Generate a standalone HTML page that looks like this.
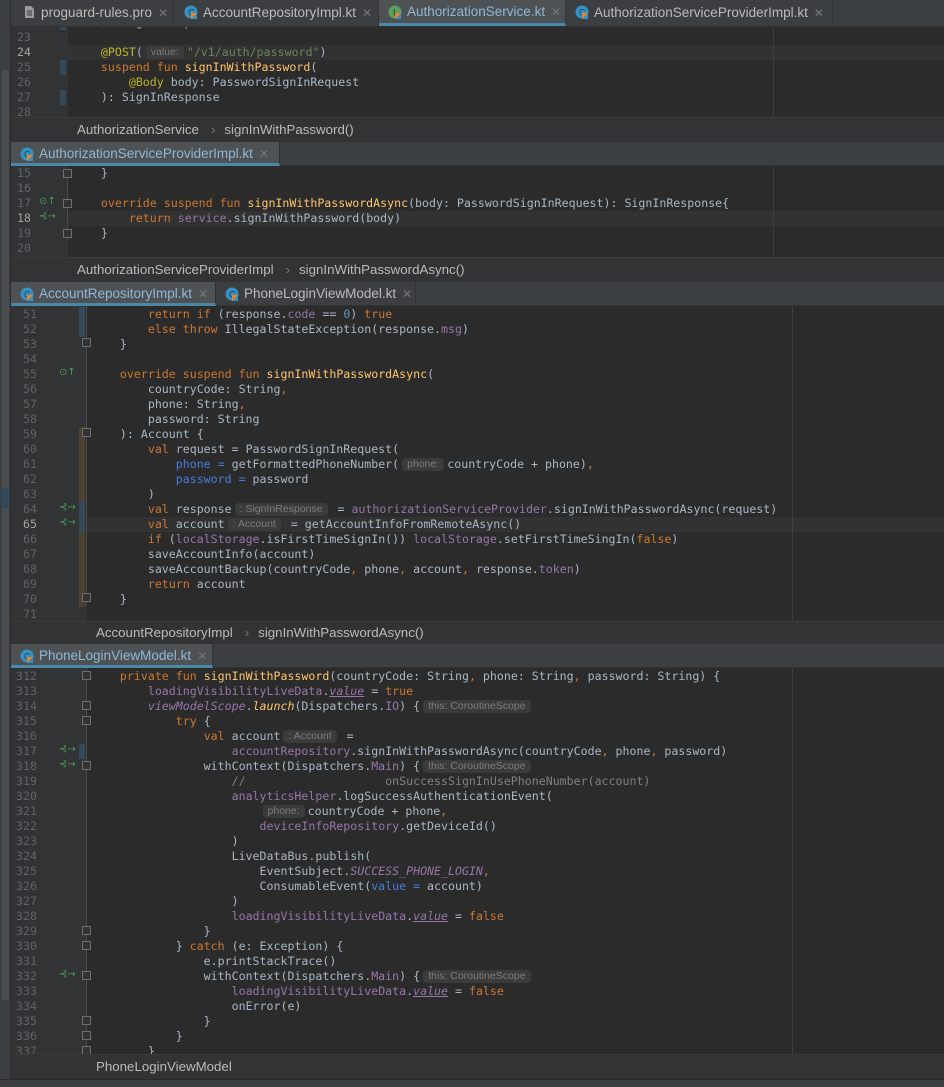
<!DOCTYPE html>
<html><head><meta charset="utf-8"><style>
*{margin:0;padding:0;box-sizing:border-box}
body{width:944px;height:1087px;background:#3c3f41;position:relative;overflow:hidden;font-family:"DejaVu Sans Mono",monospace}
.strip{position:absolute;left:0;top:0;width:11px;height:1087px;background:#3c3f41;border-right:1px solid #2b2b2b}
.strip i{position:absolute;left:2px;width:7px;background:#4a4d4f}
.tabs{position:absolute;left:11px;right:0;height:24px;background:#3c3f41;border-bottom:1px solid #323232;font-family:"Liberation Sans",sans-serif;font-size:13.5px;color:#bbbbbb}
.tab{position:absolute;top:0;height:24px;line-height:24px;padding-left:28px;border-right:1px solid #323232;white-space:nowrap}
.tab.act{background:#4e5254;border-bottom:3px solid #4a88a8}
.tab .x{color:#777;font-size:12px;margin-left:6px}
.ic{position:absolute;left:9px;top:5px;width:14px;height:14px}
.pane{position:absolute;left:11px;right:0;background:#2b2b2b;overflow:hidden}
.gut{position:absolute;left:0;top:0;bottom:0;background:#313335}
.ln{position:absolute;left:0;text-align:right;color:#606366;font-size:11.6px;line-height:15px;white-space:pre}
.code{position:absolute;font-size:11.6px;line-height:15px;color:#a9b7c6;white-space:pre}
.code div{height:15px}
.cur{position:absolute;right:0;height:15px;background:#323232}
.marg{position:absolute;top:0;bottom:0;width:1px;background:#3f3f3f}
.k{color:#cc7832}.f{color:#ffc66d}.s{color:#6a8759}.n{color:#6897bb}.p{color:#9876aa}.a{color:#bbb529}.c{color:#808080}.b{color:#467cda}
.i{font-style:italic}.u{text-decoration:underline}
.h{display:inline-block;background:#3b3b3b;color:#7d7d7d;font-family:"Liberation Sans",sans-serif;font-size:10.5px;line-height:13px;padding:0 5px;border-radius:4px;margin:0 3px;vertical-align:1px}
.bc{position:absolute;left:11px;right:0;height:25px;background:#313335;border-top:1px solid #3a3a3a;font-family:"Liberation Sans",sans-serif;font-size:13.3px;color:#bbbbbb;line-height:24px;white-space:nowrap}
.bc .sp{color:#777;margin:0 9px 0 12px}
.chg{position:absolute;width:6px}
.fold{position:absolute;width:1px;background:#4a4a4a}
.fm{position:absolute;width:9px;height:9px;border:1px solid #6e6e6e;background:#313335}
.gi{position:absolute;color:#499c54;font-size:10px;font-family:"DejaVu Sans",sans-serif}
</style></head><body>
<div class="strip"><i style="top:70px;height:930px"></i><i style="top:488px;height:20px;background:#2f4a5e"></i></div>

<div class="tabs" style="top:0;height:27px">
 <div class="tab" style="left:2px;width:161px;height:26px;line-height:26px"><svg class="ic" viewBox="0 0 14 14"><path d="M3 1h6l3 3v9H3z" fill="#9a9a9a"/><path d="M5 6h5M5 8h5M5 10h5" stroke="#3c3f41"/></svg>proguard-rules.pro<span class="x">✕</span></div>
 <div class="tab" style="left:164px;width:204px;height:26px;line-height:26px"><svg class="ic" viewBox="0 0 14 14"><circle cx="7" cy="7" r="6.5" fill="#3592c4"/><text x="4" y="10.5" font-size="9" fill="#1e3a4e" font-family="Liberation Sans">C</text><path d="M7 14V8h6z" fill="#f58220"/><path d="M7 14l6-6v6z" fill="#3592c4"/></svg>AccountRepositoryImpl.kt<span class="x">✕</span></div>
 <div class="tab act" style="left:368px;width:187px;height:26px;line-height:24px;color:#8fb8d8"><svg class="ic" viewBox="0 0 14 14"><circle cx="7" cy="7" r="6.5" fill="#5c9f5e"/><text x="5" y="10.5" font-size="9" fill="#1d3a1e" font-family="Liberation Sans">I</text><path d="M7 14V8h6z" fill="#f58220"/><path d="M7 14l6-6v6z" fill="#3592c4"/></svg>AuthorizationService.kt<span class="x">✕</span></div>
 <div class="tab" style="left:555px;width:267px;height:26px;line-height:26px"><svg class="ic" viewBox="0 0 14 14"><circle cx="7" cy="7" r="6.5" fill="#3592c4"/><text x="4" y="10.5" font-size="9" fill="#1e3a4e" font-family="Liberation Sans">C</text><path d="M7 14V8h6z" fill="#f58220"/><path d="M7 14l6-6v6z" fill="#3592c4"/></svg>AuthorizationServiceProviderImpl.kt<span class="x">✕</span></div>
</div>

<div class="pane" style="top:27px;height:90px">
 <div class="gut" style="width:57px"></div>
 <div class="cur" style="left:57px;top:18px"></div>
 <div class="marg" style="left:762px"></div>
 <div class="chg" style="left:49px;top:-7px;height:10px;background:#34495a"></div>
 <div class="chg" style="left:49px;top:33px;height:15px;background:#34495a"></div>
 <div class="chg" style="left:49px;top:63px;height:15px;background:#34495a"></div>
 <div class="ln" style="width:20px;top:-12px"><div>22</div><div>23</div><div style="color:#a4a3a3">24</div><div>25</div><div>26</div><div>27</div><div>28</div></div>
 <div class="code" style="left:62px;top:-12px"><div>    ): SignInResponse</div><div></div><div>    <span class="a">@POST</span>(<span class="h">value:</span><span class="s">"/v1/auth/password"</span>)</div><div>    <span class="k">suspend fun </span><span class="f">signInWithPassword</span>(</div><div>        <span class="a">@Body</span> body: PasswordSignInRequest</div><div>    ): SignInResponse</div><div></div></div>
</div>
<div class="bc" style="top:117px;padding-left:66px">AuthorizationService<span class="sp">›</span>signInWithPassword()</div>

<div class="tabs" style="top:142px"><div class="tab act" style="left:0;width:269px;color:#8fb8d8"><svg class="ic" viewBox="0 0 14 14"><circle cx="7" cy="7" r="6.5" fill="#3592c4"/><text x="4" y="10.5" font-size="9" fill="#1e3a4e" font-family="Liberation Sans">C</text><path d="M7 14V8h6z" fill="#f58220"/><path d="M7 14l6-6v6z" fill="#3592c4"/></svg>AuthorizationServiceProviderImpl.kt<span class="x">✕</span></div></div>
<div class="pane" style="top:166px;height:91px">
 <div class="gut" style="width:57px"></div>
 <div class="cur" style="left:57px;top:45px"></div>
 <div class="marg" style="left:762px"></div>
 <div class="fold" style="left:56px;top:5px;height:70px"></div>
 <div class="fm" style="left:52px;top:3px"></div><div class="fm" style="left:52px;top:33px"></div><div class="fm" style="left:52px;top:63px"></div>
 <div class="gi" style="left:28px;top:30px">⊙↑</div><div class="gi" style="left:28px;top:45px">⊰→</div>
 <div class="ln" style="width:20px;top:0"><div>15</div><div>16</div><div>17</div><div style="color:#a4a3a3">18</div><div>19</div><div>20</div></div>
 <div class="code" style="left:62px;top:0"><div>    }</div><div></div><div>    <span class="k">override suspend fun </span><span class="f">signInWithPasswordAsync</span>(body: PasswordSignInRequest): SignInResponse{</div><div>        <span class="k">return </span><span class="p">service</span>.signInWithPassword(body)</div><div>    }</div><div></div></div>
</div>
<div class="bc" style="top:257px;padding-left:66px">AuthorizationServiceProviderImpl<span class="sp">›</span>signInWithPasswordAsync()</div>

<div class="tabs" style="top:282px">
 <div class="tab act" style="left:0;width:205px;color:#8fb8d8"><svg class="ic" viewBox="0 0 14 14"><circle cx="7" cy="7" r="6.5" fill="#3592c4"/><text x="4" y="10.5" font-size="9" fill="#1e3a4e" font-family="Liberation Sans">C</text><path d="M7 14V8h6z" fill="#f58220"/><path d="M7 14l6-6v6z" fill="#3592c4"/></svg>AccountRepositoryImpl.kt<span class="x">✕</span></div>
 <div class="tab" style="left:205px;width:200px"><svg class="ic" viewBox="0 0 14 14"><circle cx="7" cy="7" r="6.5" fill="#3592c4"/><text x="4" y="10.5" font-size="9" fill="#1e3a4e" font-family="Liberation Sans">C</text><path d="M7 14V8h6z" fill="#f58220"/><path d="M7 14l6-6v6z" fill="#3592c4"/></svg>PhoneLoginViewModel.kt<span class="x">✕</span></div>
</div>
<div class="pane" style="top:306px;height:315px">
 <div class="gut" style="width:76px"></div>
 <div class="cur" style="left:76px;top:211px"></div>
 <div class="marg" style="left:781px"></div>
 <div class="chg" style="left:68px;top:1px;height:30px;background:#34495a"></div>
 <div class="chg" style="left:68px;top:121px;height:180px;background:#4b4234"></div>
 <div class="chg" style="left:68px;top:196px;height:30px;background:#34495a"></div>
 <div class="fold" style="left:75px;top:0;height:300px"></div>
 <div class="fm" style="left:71px;top:32px"></div><div class="fm" style="left:71px;top:122px"></div><div class="fm" style="left:71px;top:287px"></div>
 <div class="gi" style="left:48px;top:61px">⊙↑</div><div class="gi" style="left:48px;top:196px">⊰→</div><div class="gi" style="left:48px;top:211px">⊰→</div>
 <div class="ln" style="width:26px;top:1px"><div>51</div><div>52</div><div>53</div><div>54</div><div>55</div><div>56</div><div>57</div><div>58</div><div>59</div><div>60</div><div>61</div><div>62</div><div>63</div><div>64</div><div style="color:#a4a3a3">65</div><div>66</div><div>67</div><div>68</div><div>69</div><div>70</div><div>71</div></div>
 <div class="code" style="left:81px;top:1px"><div>        <span class="k">return if </span>(response.<span class="p">code</span> == <span class="n">0</span>) <span class="k">true</span></div><div>        <span class="k">else throw </span>IllegalStateException(response.<span class="p">msg</span>)</div><div>    }</div><div></div><div>    <span class="k">override suspend fun </span><span class="f">signInWithPasswordAsync</span>(</div><div>        countryCode: String<span class="k">,</span></div><div>        phone: String<span class="k">,</span></div><div>        password: String</div><div>    ): Account {</div><div>        <span class="k">val </span>request = PasswordSignInRequest(</div><div>            <span class="b">phone = </span>getFormattedPhoneNumber(<span class="h">phone:</span>countryCode + phone)<span class="k">,</span></div><div>            <span class="b">password = </span>password</div><div>        )</div><div>        <span class="k">val </span>response<span class="h">: SignInResponse</span> = <span class="p">authorizationServiceProvider</span>.signInWithPasswordAsync(request)</div><div>        <span class="k">val </span>account<span class="h">: Account</span> = getAccountInfoFromRemoteAsync()</div><div>        <span class="k">if </span>(<span class="p">localStorage</span>.isFirstTimeSignIn()) <span class="p">localStorage</span>.setFirstTimeSingIn(<span class="k">false</span>)</div><div>        saveAccountInfo(account)</div><div>        saveAccountBackup(countryCode<span class="k">, </span>phone<span class="k">, </span>account<span class="k">, </span>response.<span class="p">token</span>)</div><div>        <span class="k">return </span>account</div><div>    }</div><div></div></div>
</div>
<div class="bc" style="top:621px;height:23px;line-height:22px;padding-left:85px">AccountRepositoryImpl<span class="sp">›</span>signInWithPasswordAsync()</div>

<div class="tabs" style="top:644px"><div class="tab act" style="left:0;width:202px;color:#8fb8d8"><svg class="ic" viewBox="0 0 14 14"><circle cx="7" cy="7" r="6.5" fill="#3592c4"/><text x="4" y="10.5" font-size="9" fill="#1e3a4e" font-family="Liberation Sans">C</text><path d="M7 14V8h6z" fill="#f58220"/><path d="M7 14l6-6v6z" fill="#3592c4"/></svg>PhoneLoginViewModel.kt<span class="x">✕</span></div></div>
<div class="pane" style="top:668px;height:386px">
 <div class="gut" style="width:76px"></div>
 <div class="marg" style="left:781px"></div>
 <div class="chg" style="left:68px;top:76px;height:15px;background:#34495a"></div>
 <div class="fold" style="left:75px;top:0;height:386px"></div>
 <div class="fm" style="left:71px;top:3px"></div><div class="fm" style="left:71px;top:33px"></div><div class="fm" style="left:71px;top:48px"></div><div class="fm" style="left:71px;top:93px"></div><div class="fm" style="left:71px;top:258px"></div><div class="fm" style="left:71px;top:273px"></div><div class="fm" style="left:71px;top:303px"></div><div class="fm" style="left:71px;top:348px"></div><div class="fm" style="left:71px;top:363px"></div><div class="fm" style="left:71px;top:378px"></div>
 <div class="gi" style="left:48px;top:76px">⊰→</div><div class="gi" style="left:48px;top:91px">⊰→</div><div class="gi" style="left:48px;top:301px">⊰→</div>
 <div class="ln" style="width:26px;top:1px"><div>312</div><div>313</div><div>314</div><div>315</div><div>316</div><div>317</div><div>318</div><div>319</div><div>320</div><div>321</div><div>322</div><div>323</div><div>324</div><div>325</div><div>326</div><div>327</div><div>328</div><div>329</div><div>330</div><div>331</div><div>332</div><div>333</div><div>334</div><div>335</div><div>336</div><div>337</div></div>
 <div class="code" style="left:81px;top:1px"><div>    <span class="k">private fun </span><span class="f">signInWithPassword</span>(countryCode: String<span class="k">, </span>phone: String<span class="k">, </span>password: String) {</div><div>        <span class="p">loadingVisibilityLiveData</span>.<span class="p i u">value</span> = <span class="k">true</span></div><div>        <span class="p i">viewModelScope</span>.<span class="f i">launch</span>(Dispatchers.<span class="p">IO</span>) {<span class="h">this: CoroutineScope</span></div><div>            <span class="k">try </span>{</div><div>                <span class="k">val </span>account<span class="h">: Account</span> =</div><div>                    <span class="p">accountRepository</span>.signInWithPasswordAsync(countryCode<span class="k">, </span>phone<span class="k">, </span>password)</div><div>                withContext(Dispatchers.<span class="p">Main</span>) {<span class="h">this: CoroutineScope</span></div><div>                    <span class="c">//                    onSuccessSignInUsePhoneNumber(account)</span></div><div>                    <span class="p">analyticsHelper</span>.logSuccessAuthenticationEvent(</div><div>                        <span class="h">phone:</span>countryCode + phone<span class="k">,</span></div><div>                        <span class="p">deviceInfoRepository</span>.getDeviceId()</div><div>                    )</div><div>                    LiveDataBus.publish(</div><div>                        EventSubject.<span class="p i">SUCCESS_PHONE_LOGIN</span><span class="k">,</span></div><div>                        ConsumableEvent(<span class="b">value = </span>account)</div><div>                    )</div><div>                    <span class="p">loadingVisibilityLiveData</span>.<span class="p i u">value</span> = <span class="k">false</span></div><div>                }</div><div>            } <span class="k">catch </span>(e: Exception) {</div><div>                e.printStackTrace()</div><div>                withContext(Dispatchers.<span class="p">Main</span>) {<span class="h">this: CoroutineScope</span></div><div>                    <span class="p">loadingVisibilityLiveData</span>.<span class="p i u">value</span> = <span class="k">false</span></div><div>                    onError(e)</div><div>                }</div><div>            }</div><div>        }</div></div>
</div>
<div class="bc" style="top:1054px;padding-left:85px">PhoneLoginViewModel</div>
<div style="position:absolute;left:0;top:1079px;width:944px;height:8px;background:#3c3f41;border-top:1px solid #2b2b2b"></div>
</body></html>
